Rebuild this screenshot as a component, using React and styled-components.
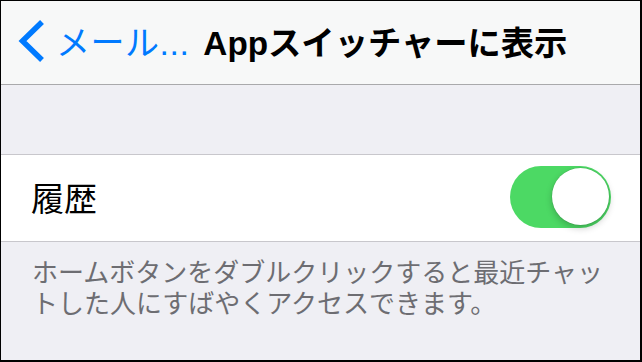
import React from "react";
import styled, { createGlobalStyle } from "styled-components";

const Global = createGlobalStyle`
  html, body { margin: 0; padding: 0; background: #fff; }
  body { font-family: "Liberation Sans", "Noto Sans CJK JP", sans-serif; }
  * { box-sizing: border-box; }
`;

const Screen = styled.div`
  width: 642px;
  height: 362px;
  display: flex;
  flex-direction: column;
  background: #efeff4;
  border-style: solid;
  border-color: #000;
  border-width: 1px 2px 2px 1px;
  overflow: hidden;
`;

const NavBar = styled.header`
  height: 84px;
  flex: none;
  display: flex;
  align-items: center;
  padding: 0 0 4px 16px;
  background: #f7f8f8;
  border-bottom: 1px solid #a9a9ab;
`;

const BackButton = styled.div`
  display: flex;
  align-items: center;
  color: #007aff;
  font-size: 34px;
  white-space: nowrap;
`;

const BackLabel = styled.span`
  margin-left: 11px;
  letter-spacing: 0.5px;
`;

const Title = styled.h1`
  margin: 0 0 0 14px;
  font-size: 33.3px;
  font-weight: 700;
  color: #000;
  white-space: nowrap;
`;

const Spacer = styled.div`
  height: 69px;
  flex: none;
`;

const Group = styled.section`
  background: #fff;
  border-top: 1px solid #c8c7cc;
  border-bottom: 1px solid #c8c7cc;
`;

const Row = styled.div`
  height: 86px;
  display: flex;
  align-items: center;
  justify-content: space-between;
  padding: 0 29px 3px 30px;
`;

const Label = styled.span`
  font-size: 33px;
  color: #000;
`;

const Switch = styled.div`
  position: relative;
  width: 101px;
  height: 62px;
  border-radius: 31px;
  background: ${(p) => (p.$on ? "#4cd964" : "#e5e5ea")};
`;

const Knob = styled.div`
  position: absolute;
  top: 2px;
  ${(p) => (p.$on ? "right: 2px;" : "left: 2px;")}
  width: 57px;
  height: 57px;
  border-radius: 50%;
  background: #fff;
  box-shadow: 0 3px 7px rgba(0, 0, 0, 0.22), 0 0 0 0.5px rgba(0, 0, 0, 0.12);
`;

const Footer = styled.p`
  margin: 0;
  padding: 14px 24px 0 31px;
  font-family: "Noto Sans CJK JP", sans-serif;
  font-size: 26px;
  line-height: 30.5px;
  color: #6d6d72;
`;

const Chevron = () => (
  <svg width="28" height="44" viewBox="0 0 28 44">
    <path d="M25 3 L5.5 22 L25 41" fill="none" stroke="#007aff" strokeWidth="5.5" />
  </svg>
);

export default function App() {
  return (
    <>
      <Global />
      <Screen>
        <NavBar>
          <BackButton>
            <Chevron />
            <BackLabel>メール...</BackLabel>
          </BackButton>
          <Title>Appスイッチャーに表示</Title>
        </NavBar>
        <Spacer />
        <Group>
          <Row>
            <Label>履歴</Label>
            <Switch $on>
              <Knob $on />
            </Switch>
          </Row>
        </Group>
        <Footer>
          ホームボタンをダブルクリックすると最近チャットした人にすばやくアクセスできます。
        </Footer>
      </Screen>
    </>
  );
}
